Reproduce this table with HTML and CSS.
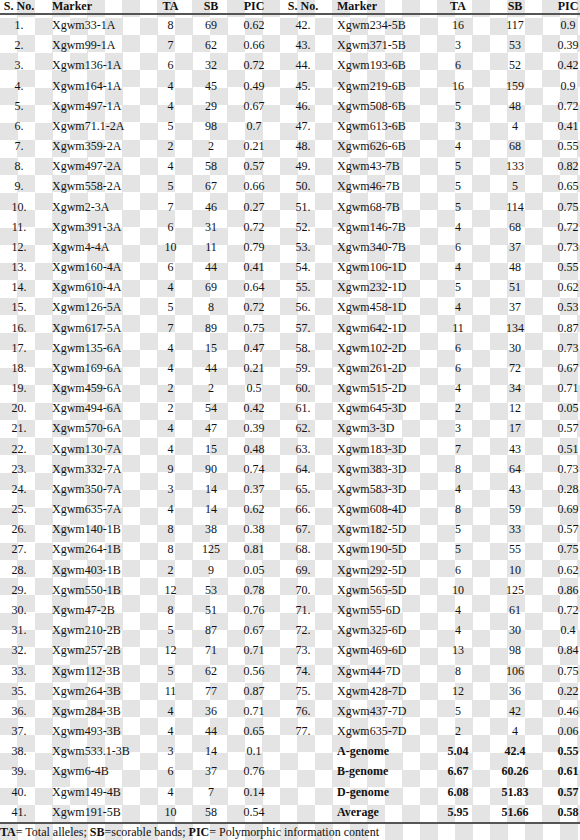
FILE: index.html
```html
<!DOCTYPE html>
<html>
<head>
<meta charset="utf-8">
<link rel="stylesheet" href="styles.css">
</head>
<body>
<div class="page">
  <div class="table">
    <div class="row head">
      <span class="c">S. No.</span><span class="l">Marker</span><span class="c">TA</span><span class="c">SB</span><span class="c">PIC</span>
      <span class="c">S. No.</span><span class="l">Marker</span><span class="c">TA</span><span class="c">SB</span><span class="c">PIC</span>
    </div>
    <div class="row"><span class="c">1.</span><span class="l">Xgwm33-1A</span><span class="c">8</span><span class="c">69</span><span class="c">0.62</span><span class="c">42.</span><span class="l">Xgwm234-5B</span><span class="c">16</span><span class="c">117</span><span class="c">0.9</span></div>
    <div class="row"><span class="c">2.</span><span class="l">Xgwm99-1A</span><span class="c">7</span><span class="c">62</span><span class="c">0.66</span><span class="c">43.</span><span class="l">Xgwm371-5B</span><span class="c">3</span><span class="c">53</span><span class="c">0.39</span></div>
    <div class="row"><span class="c">3.</span><span class="l">Xgwm136-1A</span><span class="c">6</span><span class="c">32</span><span class="c">0.72</span><span class="c">44.</span><span class="l">Xgwm193-6B</span><span class="c">6</span><span class="c">52</span><span class="c">0.42</span></div>
    <div class="row"><span class="c">4.</span><span class="l">Xgwm164-1A</span><span class="c">4</span><span class="c">45</span><span class="c">0.49</span><span class="c">45.</span><span class="l">Xgwm219-6B</span><span class="c">16</span><span class="c">159</span><span class="c">0.9</span></div>
    <div class="row"><span class="c">5.</span><span class="l">Xgwm497-1A</span><span class="c">4</span><span class="c">29</span><span class="c">0.67</span><span class="c">46.</span><span class="l">Xgwm508-6B</span><span class="c">5</span><span class="c">48</span><span class="c">0.72</span></div>
    <div class="row"><span class="c">6.</span><span class="l">Xgwm71.1-2A</span><span class="c">5</span><span class="c">98</span><span class="c">0.7</span><span class="c">47.</span><span class="l">Xgwm613-6B</span><span class="c">3</span><span class="c">4</span><span class="c">0.41</span></div>
    <div class="row"><span class="c">7.</span><span class="l">Xgwm359-2A</span><span class="c">2</span><span class="c">2</span><span class="c">0.21</span><span class="c">48.</span><span class="l">Xgwm626-6B</span><span class="c">4</span><span class="c">68</span><span class="c">0.55</span></div>
    <div class="row"><span class="c">8.</span><span class="l">Xgwm497-2A</span><span class="c">4</span><span class="c">58</span><span class="c">0.57</span><span class="c">49.</span><span class="l">Xgwm43-7B</span><span class="c">5</span><span class="c">133</span><span class="c">0.82</span></div>
    <div class="row"><span class="c">9.</span><span class="l">Xgwm558-2A</span><span class="c">5</span><span class="c">67</span><span class="c">0.66</span><span class="c">50.</span><span class="l">Xgwm46-7B</span><span class="c">5</span><span class="c">5</span><span class="c">0.65</span></div>
    <div class="row"><span class="c">10.</span><span class="l">Xgwm2-3A</span><span class="c">7</span><span class="c">46</span><span class="c">0.27</span><span class="c">51.</span><span class="l">Xgwm68-7B</span><span class="c">5</span><span class="c">114</span><span class="c">0.75</span></div>
    <div class="row"><span class="c">11.</span><span class="l">Xgwm391-3A</span><span class="c">6</span><span class="c">31</span><span class="c">0.72</span><span class="c">52.</span><span class="l">Xgwm146-7B</span><span class="c">4</span><span class="c">68</span><span class="c">0.72</span></div>
    <div class="row"><span class="c">12.</span><span class="l">Xgwm4-4A</span><span class="c">10</span><span class="c">11</span><span class="c">0.79</span><span class="c">53.</span><span class="l">Xgwm340-7B</span><span class="c">6</span><span class="c">37</span><span class="c">0.73</span></div>
    <div class="row"><span class="c">13.</span><span class="l">Xgwm160-4A</span><span class="c">6</span><span class="c">44</span><span class="c">0.41</span><span class="c">54.</span><span class="l">Xgwm106-1D</span><span class="c">4</span><span class="c">48</span><span class="c">0.55</span></div>
    <div class="row"><span class="c">14.</span><span class="l">Xgwm610-4A</span><span class="c">4</span><span class="c">69</span><span class="c">0.64</span><span class="c">55.</span><span class="l">Xgwm232-1D</span><span class="c">5</span><span class="c">51</span><span class="c">0.62</span></div>
    <div class="row"><span class="c">15.</span><span class="l">Xgwm126-5A</span><span class="c">5</span><span class="c">8</span><span class="c">0.72</span><span class="c">56.</span><span class="l">Xgwm458-1D</span><span class="c">4</span><span class="c">37</span><span class="c">0.53</span></div>
    <div class="row"><span class="c">16.</span><span class="l">Xgwm617-5A</span><span class="c">7</span><span class="c">89</span><span class="c">0.75</span><span class="c">57.</span><span class="l">Xgwm642-1D</span><span class="c">11</span><span class="c">134</span><span class="c">0.87</span></div>
    <div class="row"><span class="c">17.</span><span class="l">Xgwm135-6A</span><span class="c">4</span><span class="c">15</span><span class="c">0.47</span><span class="c">58.</span><span class="l">Xgwm102-2D</span><span class="c">6</span><span class="c">30</span><span class="c">0.73</span></div>
    <div class="row"><span class="c">18.</span><span class="l">Xgwm169-6A</span><span class="c">4</span><span class="c">44</span><span class="c">0.21</span><span class="c">59.</span><span class="l">Xgwm261-2D</span><span class="c">6</span><span class="c">72</span><span class="c">0.67</span></div>
    <div class="row"><span class="c">19.</span><span class="l">Xgwm459-6A</span><span class="c">2</span><span class="c">2</span><span class="c">0.5</span><span class="c">60.</span><span class="l">Xgwm515-2D</span><span class="c">4</span><span class="c">34</span><span class="c">0.71</span></div>
    <div class="row"><span class="c">20.</span><span class="l">Xgwm494-6A</span><span class="c">2</span><span class="c">54</span><span class="c">0.42</span><span class="c">61.</span><span class="l">Xgwm645-3D</span><span class="c">2</span><span class="c">12</span><span class="c">0.05</span></div>
    <div class="row"><span class="c">21.</span><span class="l">Xgwm570-6A</span><span class="c">4</span><span class="c">47</span><span class="c">0.39</span><span class="c">62.</span><span class="l">Xgwm3-3D</span><span class="c">3</span><span class="c">17</span><span class="c">0.57</span></div>
    <div class="row"><span class="c">22.</span><span class="l">Xgwm130-7A</span><span class="c">4</span><span class="c">15</span><span class="c">0.48</span><span class="c">63.</span><span class="l">Xgwm183-3D</span><span class="c">7</span><span class="c">43</span><span class="c">0.51</span></div>
    <div class="row"><span class="c">23.</span><span class="l">Xgwm332-7A</span><span class="c">9</span><span class="c">90</span><span class="c">0.74</span><span class="c">64.</span><span class="l">Xgwm383-3D</span><span class="c">8</span><span class="c">64</span><span class="c">0.73</span></div>
    <div class="row"><span class="c">24.</span><span class="l">Xgwm350-7A</span><span class="c">3</span><span class="c">14</span><span class="c">0.37</span><span class="c">65.</span><span class="l">Xgwm583-3D</span><span class="c">4</span><span class="c">43</span><span class="c">0.28</span></div>
    <div class="row"><span class="c">25.</span><span class="l">Xgwm635-7A</span><span class="c">4</span><span class="c">14</span><span class="c">0.62</span><span class="c">66.</span><span class="l">Xgwm608-4D</span><span class="c">8</span><span class="c">59</span><span class="c">0.69</span></div>
    <div class="row"><span class="c">26.</span><span class="l">Xgwm140-1B</span><span class="c">8</span><span class="c">38</span><span class="c">0.38</span><span class="c">67.</span><span class="l">Xgwm182-5D</span><span class="c">5</span><span class="c">33</span><span class="c">0.57</span></div>
    <div class="row"><span class="c">27.</span><span class="l">Xgwm264-1B</span><span class="c">8</span><span class="c">125</span><span class="c">0.81</span><span class="c">68.</span><span class="l">Xgwm190-5D</span><span class="c">5</span><span class="c">55</span><span class="c">0.75</span></div>
    <div class="row"><span class="c">28.</span><span class="l">Xgwm403-1B</span><span class="c">2</span><span class="c">9</span><span class="c">0.05</span><span class="c">69.</span><span class="l">Xgwm292-5D</span><span class="c">6</span><span class="c">10</span><span class="c">0.62</span></div>
    <div class="row"><span class="c">29.</span><span class="l">Xgwm550-1B</span><span class="c">12</span><span class="c">53</span><span class="c">0.78</span><span class="c">70.</span><span class="l">Xgwm565-5D</span><span class="c">10</span><span class="c">125</span><span class="c">0.86</span></div>
    <div class="row"><span class="c">30.</span><span class="l">Xgwm47-2B</span><span class="c">8</span><span class="c">51</span><span class="c">0.76</span><span class="c">71.</span><span class="l">Xgwm55-6D</span><span class="c">4</span><span class="c">61</span><span class="c">0.72</span></div>
    <div class="row"><span class="c">31.</span><span class="l">Xgwm210-2B</span><span class="c">5</span><span class="c">87</span><span class="c">0.67</span><span class="c">72.</span><span class="l">Xgwm325-6D</span><span class="c">4</span><span class="c">30</span><span class="c">0.4</span></div>
    <div class="row"><span class="c">32.</span><span class="l">Xgwm257-2B</span><span class="c">12</span><span class="c">71</span><span class="c">0.71</span><span class="c">73.</span><span class="l">Xgwm469-6D</span><span class="c">13</span><span class="c">98</span><span class="c">0.84</span></div>
    <div class="row"><span class="c">33.</span><span class="l">Xgwm112-3B</span><span class="c">5</span><span class="c">62</span><span class="c">0.56</span><span class="c">74.</span><span class="l">Xgwm44-7D</span><span class="c">8</span><span class="c">106</span><span class="c">0.75</span></div>
    <div class="row"><span class="c">35.</span><span class="l">Xgwm264-3B</span><span class="c">11</span><span class="c">77</span><span class="c">0.87</span><span class="c">75.</span><span class="l">Xgwm428-7D</span><span class="c">12</span><span class="c">36</span><span class="c">0.22</span></div>
    <div class="row"><span class="c">36.</span><span class="l">Xgwm284-3B</span><span class="c">4</span><span class="c">36</span><span class="c">0.71</span><span class="c">76.</span><span class="l">Xgwm437-7D</span><span class="c">5</span><span class="c">42</span><span class="c">0.46</span></div>
    <div class="row"><span class="c">37.</span><span class="l">Xgwm493-3B</span><span class="c">4</span><span class="c">44</span><span class="c">0.65</span><span class="c">77.</span><span class="l">Xgwm635-7D</span><span class="c">2</span><span class="c">4</span><span class="c">0.06</span></div>
    <div class="row"><span class="c">38.</span><span class="l">Xgwm533.1-3B</span><span class="c">3</span><span class="c">14</span><span class="c">0.1</span><span class="c"></span><span class="l b">A-genome</span><span class="c b">5.04</span><span class="c b">42.4</span><span class="c b">0.55</span></div>
    <div class="row"><span class="c">39.</span><span class="l">Xgwm6-4B</span><span class="c">6</span><span class="c">37</span><span class="c">0.76</span><span class="c"></span><span class="l b">B-genome</span><span class="c b">6.67</span><span class="c b">60.26</span><span class="c b">0.61</span></div>
    <div class="row"><span class="c">40.</span><span class="l">Xgwm149-4B</span><span class="c">4</span><span class="c">7</span><span class="c">0.14</span><span class="c"></span><span class="l b">D-genome</span><span class="c b">6.08</span><span class="c b">51.83</span><span class="c b">0.57</span></div>
    <div class="row"><span class="c">41.</span><span class="l">Xgwm191-5B</span><span class="c">10</span><span class="c">58</span><span class="c">0.54</span><span class="c"></span><span class="l b">Average</span><span class="c b">5.95</span><span class="c b">51.66</span><span class="c b">0.58</span></div>
  </div>
  <div class="foot"><b>TA</b>= Total alleles; <b>SB</b>=scorable bands; <b>PIC</b>= Polymorphic information content</div>
</div>
</body>
</html>
```

FILE: styles.css
```css
html, body {
  margin: 0;
  padding: 0;
}
body {
  width: 580px;
  height: 840px;
  overflow: hidden;
  background-color: #ffffff;
  background-image: repeating-conic-gradient(#e4e4e4 0 25%, #ffffff 0 50%);
  background-size: 35px 35px;
  background-position: 0 0;
  font-family: "Liberation Serif", "Times New Roman", serif;
  font-size: 12px;
  color: #111;
}
.page {
  width: 580px;
  overflow: hidden;
}
.table {
  width: 587px;
  border-bottom: 2px solid #555;
}
.row {
  display: grid;
  grid-template-columns: 38px 112px 41px 40px 46px 52px 106px 46px 68px 38px;
  height: 20.18px;
  line-height: 20.18px;
  white-space: nowrap;
}
.row.head {
  height: 13px;
  line-height: 13.6px;
  font-weight: bold;
  border-bottom: 2px solid #555;
}
.c {
  text-align: center;
}
.l {
  text-align: left;
}
.row > .l:nth-child(2) {
  padding-left: 14px;
}
.row > .l:nth-child(7) {
  padding-left: 8px;
}
.b {
  font-weight: bold;
}
.foot {
  line-height: 16px;
  white-space: nowrap;
}
```
